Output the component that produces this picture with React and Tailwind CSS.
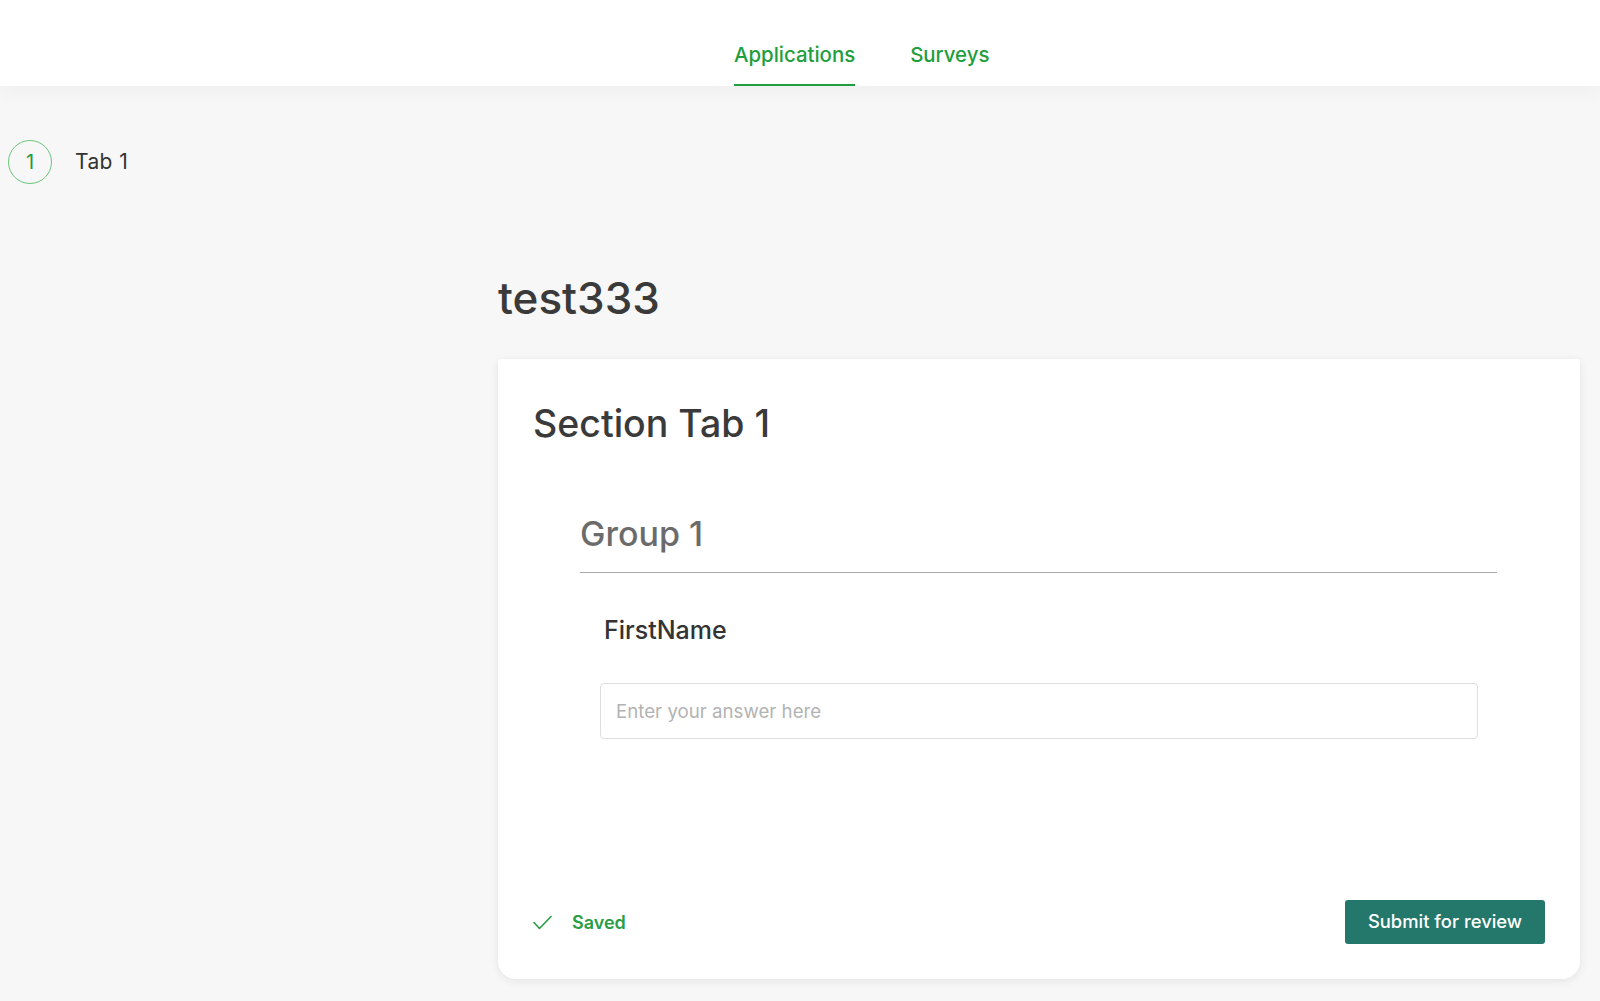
export default function App() {
  return (
    <div className="min-h-[1001px] bg-[#f7f7f7] font-['Inter',sans-serif] overflow-hidden">
      <header className="relative z-10 h-[86px] bg-white shadow-[0_6px_20px_rgba(0,0,0,0.035)] flex items-stretch pl-[734px] gap-[55px]">
        <a className="relative flex items-center pt-[24px] text-[20.4px] font-medium text-[#1e9e3c]">
          Applications
          <span className="absolute left-0 right-0 bottom-0 h-[2px] bg-[#1e9e3c]" />
        </a>
        <a className="relative flex items-center pt-[24px] text-[20.4px] font-medium text-[#1e9e3c]">
          Surveys
        </a>
      </header>
      <div className="flex">
        <aside className="w-[498px] shrink-0 pt-[54px] pl-[8px]">
          <div className="flex items-center gap-[23px]">
            <div className="w-[44px] h-[44px] rounded-full border border-[#6cc47c] flex items-center justify-center text-[20px] text-[#1e9e3c]">
              1
            </div>
            <span className="text-[21px] tracking-[0.4px] text-[#333333]">Tab 1</span>
          </div>
        </aside>
        <main className="w-[1082px] shrink-0 pt-[186px]">
          <h1 className="text-[44px] leading-[52px] font-medium text-[#3a3a3a] mb-[35px]">test333</h1>
          <section className="h-[620px] bg-white rounded-t-[3px] rounded-b-[18px] shadow-[0_2px_10px_rgba(0,0,0,0.08)] flex flex-col px-[35px] pt-[42px] pb-[35px]">
            <h2 className="text-[37.5px] leading-[46px] font-medium text-[#3a3a3a]">Section Tab 1</h2>
            <div className="mt-[67px] ml-[47px] mr-[48px]">
              <h3 className="text-[34px] leading-[40px] font-medium text-[#6b6b6b] pb-[18px] border-b border-[#a8a8a8]">Group 1</h3>
              <div className="pl-[20px] pr-[19px]">
                <label className="block mt-[43px] ml-[4px] text-[25px] leading-[29px] font-medium text-[#333333]">FirstName</label>
                <input
                  type="text"
                  placeholder="Enter your answer here"
                  className="mt-[38px] w-full h-[56px] rounded-[4px] border border-[#dedede] bg-white px-[15px] text-[18.7px] text-[#333] placeholder:text-[#b3b3b3] outline-none"
                />
              </div>
            </div>
            <div className="mt-auto flex items-center justify-between">
              <div className="flex items-center gap-[20px]">
                <svg width="19" height="15" viewBox="0 0 19 15" fill="none">
                  <path d="M1 7.5 L6.5 13.5 L18 1.5" stroke="#2a9d45" strokeWidth="1.6" strokeLinecap="round" strokeLinejoin="round" />
                </svg>
                <span className="text-[18px] font-semibold text-[#2a9d45]">Saved</span>
              </div>
              <button className="w-[200px] h-[44px] bg-[#23786b] rounded-[3px] text-white text-[18.4px] font-medium">
                Submit for review
              </button>
            </div>
          </section>
        </main>
      </div>
    </div>
  );
}
